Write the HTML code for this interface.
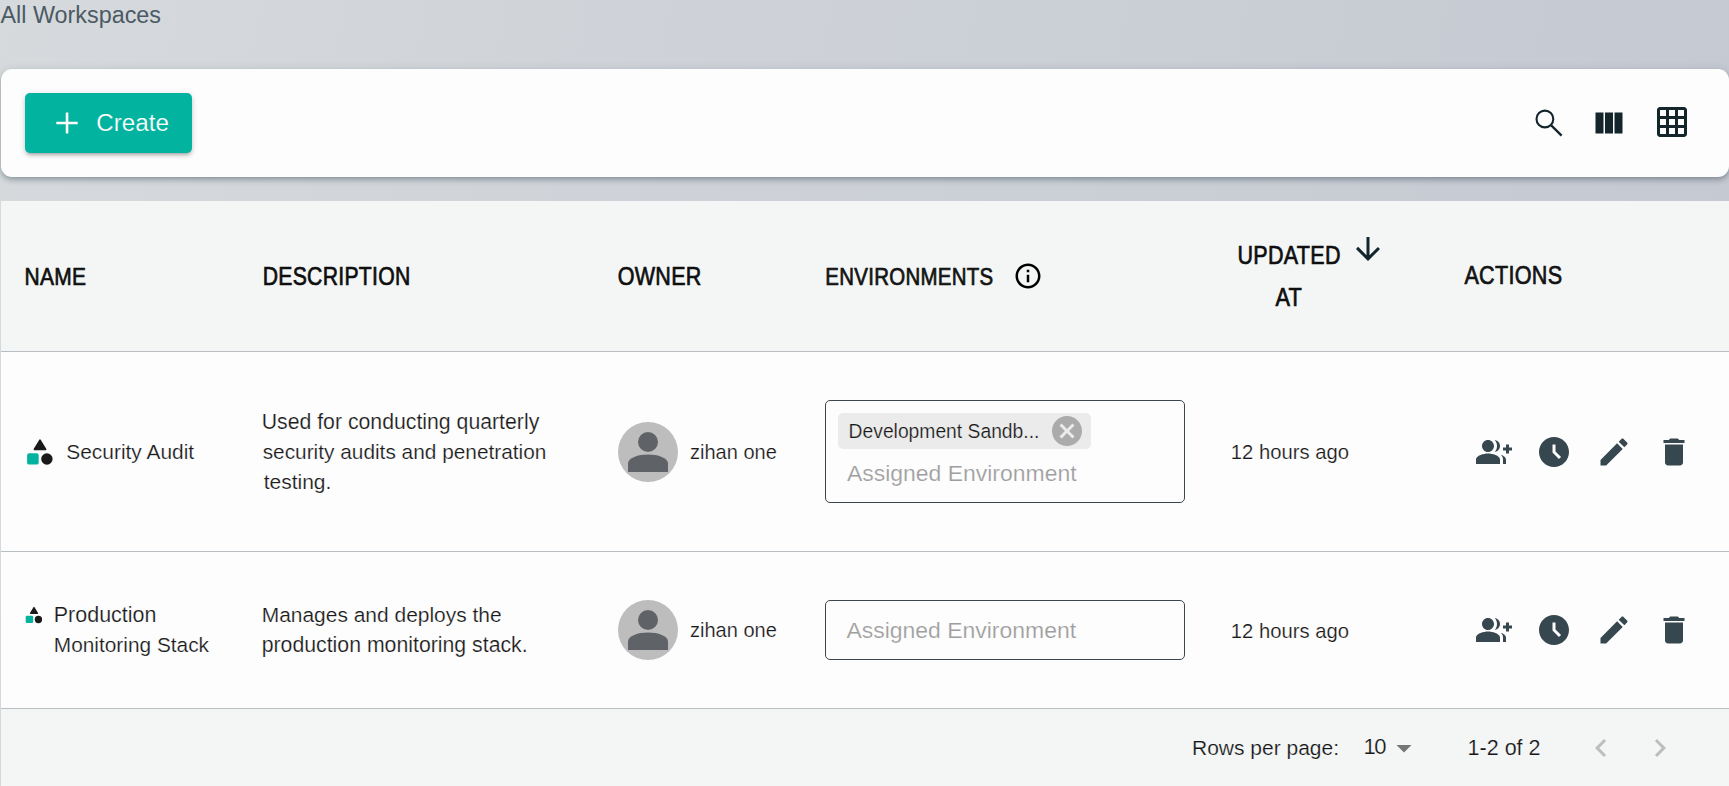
<!DOCTYPE html>
<html>
<head>
<meta charset="utf-8">
<style>
html,body{margin:0;padding:0}
body{width:1729px;height:786px;overflow:hidden;position:relative;
  background:linear-gradient(100deg,#d6dadd 0%,#cdd1d7 45%,#c4c8d1 100%);
  font-family:"Liberation Sans",sans-serif;}
.t{position:absolute;white-space:pre;line-height:1;margin:0}
.ic{position:absolute;display:block}
.hd{font-weight:700;font-size:21px;color:#0f0f0f;transform:scaleY(1.22);transform-origin:0 17.85px}
.card{position:absolute;left:1px;top:69px;width:1728px;height:108px;border-radius:11px;background:#fdfdfd;
  box-shadow:0 2px 4px -1px rgba(20,45,60,.22),0 4px 5px 0 rgba(20,45,60,.15),0 1px 10px 0 rgba(20,45,60,.12)}
.btn{position:absolute;left:25px;top:93px;width:167px;height:60px;border-radius:5px;background:#02b3a0;
  box-shadow:0 3px 3px -2px rgba(0,0,0,.2),0 3px 4px 0 rgba(0,0,0,.14),0 1px 7px 0 rgba(0,0,0,.1)}
.tbl{position:absolute;left:1px;top:201px;width:1728px;height:585px;background:#fdfdfd}
.hdr{position:absolute;left:0;top:0;width:1728px;height:150px;background:#f4f6f6;border-bottom:1px solid #b7bdc1}
.row1{position:absolute;left:0;top:151px;width:1728px;height:199px;border-bottom:1px solid #b7bdc1}
.row2{position:absolute;left:0;top:351px;width:1728px;height:156px;border-bottom:1px solid #b7bdc1}
.ftr{position:absolute;left:0;top:508px;width:1728px;height:77px;background:#f4f6f6}
.body{font-size:20.7px;color:#1a1a1a}
.envbox{position:absolute;left:825px;width:358px;border:1px solid #3e464d;border-radius:5px}
.chip{position:absolute;left:838px;top:413px;width:253px;height:36px;border-radius:5px;background:#ebebeb}
.av{position:absolute;left:618px;width:60px;height:60px;border-radius:50%;background:#bdbdbd;overflow:hidden}
</style>
</head>
<body>

<div class="card"></div>
<div class="btn"></div>
<svg class="ic" style="left:50px;top:105px" width="35" height="35" viewBox="0 0 35 35"><path fill="#fdfbfc" d="M15.75 7.4h2.6v9.3h9.35v2.6h-9.35v9.3h-2.6v-9.3H6.3v-2.6h9.45z"/></svg>

<!-- toolbar icons -->
<svg class="ic" style="left:1530px;top:104px" width="40" height="40" viewBox="0 0 40 40"><circle cx="14.9" cy="15" r="8.4" fill="none" stroke="#14252c" stroke-width="2.1"/><line x1="21" y1="21.1" x2="31.6" y2="31.6" stroke="#14252c" stroke-width="2.3"/></svg>
<svg class="ic" style="left:1591px;top:105px" width="36" height="36" viewBox="0 0 24 24"><path fill="#14252c" d="M14.67 5v14H9.33V5h5.34zm1 14H21V5h-5.33v14zm-7.34 0V5H3v14h5.33z"/></svg>
<svg class="ic" style="left:1654px;top:104px" width="36" height="36" viewBox="0 0 24 24"><path fill="#14252c" d="M20 2H4c-1.1 0-2 .9-2 2v16c0 1.1.9 2 2 2h16c1.1 0 2-.9 2-2V4c0-1.1-.9-2-2-2zM8 20H4v-4h4v4zm0-6H4v-4h4v4zm0-6H4V4h4v4zm6 12h-4v-4h4v4zm0-6h-4v-4h4v4zm0-6h-4V4h4v4zm6 12h-4v-4h4v4zm0-6h-4v-4h4v4zm0-6h-4V4h4v4z"/></svg>

<div class="tbl">
  <div class="hdr"></div>
  <div class="row1"></div>
  <div class="row2"></div>
  <div class="ftr"></div>
</div>

<!-- header labels -->
<svg class="ic" style="left:1012.9px;top:260.9px" width="30" height="30" viewBox="0 0 24 24"><path fill="#000" d="M11 7h2v2h-2zm0 4h2v6h-2zm1-9C6.48 2 2 6.48 2 12s4.48 10 10 10 10-4.48 10-10S17.52 2 12 2zm0 18c-4.41 0-8-3.590-8-8s3.59-8 8-8 8 3.59 8 8-3.59 8-8 8z"/></svg>
<svg class="ic" style="left:1350px;top:231px" width="36" height="36" viewBox="0 0 24 24"><path fill="#14252c" d="M20 12l-1.41-1.41L13 16.17V4h-2v12.17l-5.58-5.59L4 12l8 8 8-8z"/></svg>

<!-- row 1 -->
<svg class="ic" style="left:26px;top:438px" width="28" height="28" viewBox="0 0 28 28">
  <path d="M14 2.4 L19.4 11.3 L8.6 11.3 Z" fill="#1a1a1a" stroke="#1a1a1a" stroke-width="2" stroke-linejoin="round"/>
  <rect x="1.1" y="15.3" width="11.6" height="11.3" rx="2.2" fill="#03b39f"/>
  <circle cx="20.9" cy="21" r="5.7" fill="#1a1a1a"/>
</svg>
<div class="av" style="top:422px"><svg width="60" height="60" viewBox="0 0 60 60"><circle cx="30" cy="20" r="10" fill="#5f6368"/><path fill="#5f6368" d="M10 50V41.5C10 36 20 32.6 30 32.6S50 36 50 41.5V50Z"/></svg></div>
<div class="envbox" style="top:400px;height:100.5px"></div>
<div class="chip"></div>
<svg class="ic" style="left:1048.9px;top:412.9px" width="36" height="36" viewBox="0 0 24 24"><path fill="#ababab" d="M12 2C6.47 2 2 6.47 2 12s4.47 10 10 10 10-4.47 10-10S17.53 2 12 2zm5 13.59L15.59 17 12 13.41 8.41 17 7 15.59 10.59 12 7 8.41 8.41 7 12 10.59 15.59 7 17 8.41 13.41 12 17 15.59z"/></svg>

<!-- actions row 1 -->
<svg class="ic" style="left:1476px;top:433.6px" width="36" height="36" viewBox="0 0 24 24"><path fill="#37474f" d="M22 9V7h-2v2h-2v2h2v2h2v-2h2V9zM8 12c2.21 0 4-1.79 4-4s-1.79-4-4-4-4 1.79-4 4 1.79 4 4 4zm0 1c-2.67 0-8 1.34-8 4v3h16v-3c0-2.66-5.33-4-8-4zm4.51-8.95C13.43 5.11 14 6.49 14 8s-.57 2.89-1.49 3.95C14.47 11.7 16 10.04 16 8s-1.53-3.7-3.49-3.95zm4.02 9.78C17.42 14.66 18 15.7 18 17v3h2v-3c0-1.45-1.59-2.51-3.470-3.17z"/></svg>
<svg class="ic" style="left:1536px;top:433.7px" width="36" height="36" viewBox="0 0 24 24"><path fill="#37474f" d="M11.99 2C6.47 2 2 6.48 2 12s4.47 10 9.99 10C17.52 22 22 17.52 22 12S17.52 2 11.99 2zM15.29 16.71 11 12.41V7h2v4.59l3.71 3.71-1.42 1.41z"/></svg>
<svg class="ic" style="left:1596px;top:433.7px" width="36" height="36" viewBox="0 0 24 24"><path fill="#37474f" d="M3 17.25V21h3.75L17.81 9.94l-3.75-3.75L3 17.25zM20.71 7.04c.39-.39.39-1.02 0-1.41l-2.34-2.34c-.39-.39-1.02-.39-1.41 0l-1.83 1.83 3.75 3.75 1.83-1.83z"/></svg>
<svg class="ic" style="left:1656px;top:433.7px" width="36" height="36" viewBox="0 0 24 24"><path fill="#37474f" d="M6 19c0 1.1.9 2 2 2h8c1.1 0 2-.9 2-2V7H6v12zM19 4h-3.5l-1-1h-5l-1 1H5v2h14V4z"/></svg>

<!-- row 2 -->
<svg class="ic" style="left:25px;top:606px" width="18" height="18" viewBox="0 0 28 28">
  <path d="M14 2.4 L19.4 11.3 L8.6 11.3 Z" fill="#1a1a1a" stroke="#1a1a1a" stroke-width="2" stroke-linejoin="round"/>
  <rect x="1.1" y="15.3" width="11.6" height="11.3" rx="2.2" fill="#03b39f"/>
  <circle cx="20.9" cy="21" r="5.7" fill="#1a1a1a"/>
</svg>
<div class="av" style="top:600px"><svg width="60" height="60" viewBox="0 0 60 60"><circle cx="30" cy="20" r="10" fill="#5f6368"/><path fill="#5f6368" d="M10 50V41.5C10 36 20 32.6 30 32.6S50 36 50 41.5V50Z"/></svg></div>
<div class="envbox" style="top:600px;height:57.5px"></div>

<svg class="ic" style="left:1476px;top:611.6px" width="36" height="36" viewBox="0 0 24 24"><path fill="#37474f" d="M22 9V7h-2v2h-2v2h2v2h2v-2h2V9zM8 12c2.21 0 4-1.79 4-4s-1.79-4-4-4-4 1.79-4 4 1.79 4 4 4zm0 1c-2.67 0-8 1.34-8 4v3h16v-3c0-2.66-5.33-4-8-4zm4.51-8.95C13.43 5.11 14 6.49 14 8s-.57 2.89-1.49 3.95C14.47 11.7 16 10.04 16 8s-1.53-3.7-3.49-3.95zm4.02 9.78C17.42 14.66 18 15.7 18 17v3h2v-3c0-1.45-1.59-2.51-3.470-3.17z"/></svg>
<svg class="ic" style="left:1536px;top:611.7px" width="36" height="36" viewBox="0 0 24 24"><path fill="#37474f" d="M11.99 2C6.47 2 2 6.48 2 12s4.47 10 9.99 10C17.52 22 22 17.52 22 12S17.52 2 11.99 2zM15.29 16.71 11 12.41V7h2v4.59l3.71 3.71-1.42 1.41z"/></svg>
<svg class="ic" style="left:1596px;top:611.7px" width="36" height="36" viewBox="0 0 24 24"><path fill="#37474f" d="M3 17.25V21h3.75L17.81 9.94l-3.75-3.75L3 17.25zM20.71 7.04c.39-.39.39-1.02 0-1.41l-2.34-2.34c-.39-.39-1.02-.39-1.41 0l-1.83 1.83 3.75 3.75 1.83-1.83z"/></svg>
<svg class="ic" style="left:1656px;top:611.7px" width="36" height="36" viewBox="0 0 24 24"><path fill="#37474f" d="M6 19c0 1.1.9 2 2 2h8c1.1 0 2-.9 2-2V7H6v12zM19 4h-3.5l-1-1h-5l-1 1H5v2h14V4z"/></svg>

<!-- footer -->
<svg class="ic" style="left:1386px;top:730px" width="36" height="36" viewBox="0 0 24 24"><path fill="#757575" d="M7 10l5 5 5-5z"/></svg>
<svg class="ic" style="left:1582.5px;top:729.6px" width="36" height="36" viewBox="0 0 24 24"><path fill="#bdbdbd" d="M15.41 7.41L14 6l-6 6 6 6 1.41-1.41L10.83 12z"/></svg>
<svg class="ic" style="left:1642px;top:729.6px" width="36" height="36" viewBox="0 0 24 24"><path fill="#bdbdbd" d="M10 6L8.59 7.41 13.17 12l-4.58 4.59L10 18l6-6z"/></svg>
<div class="t" style="left:0.5px;top:3.53px;font-size:23.37px;color:#4b5a64;;">All Workspaces</div>
<div class="t" style="left:96.3px;top:110.55px;font-size:24.18px;color:#ffffff;-webkit-text-stroke:0.2px #02b3a0;">Create</div>
<div class="t" style="left:24.6px;top:266.67px;font-size:20.98px;color:#0f0f0f;-webkit-text-stroke:0.6px #0f0f0f;letter-spacing:0.3px;transform:scaleY(1.18);transform-origin:0 17.83px;">NAME</div>
<div class="t" style="left:262.7px;top:266.51px;font-size:21.17px;color:#0f0f0f;-webkit-text-stroke:0.6px #0f0f0f;letter-spacing:0.3px;transform:scaleY(1.18);transform-origin:0 17.99px;">DESCRIPTION</div>
<div class="t" style="left:617.7px;top:268.20px;font-size:21.53px;color:#0f0f0f;-webkit-text-stroke:0.6px #0f0f0f;letter-spacing:0.3px;transform:scaleY(1.18);transform-origin:0 18.30px;">OWNER</div>
<div class="t" style="left:825.3px;top:268.21px;font-size:20.46px;color:#161616;-webkit-text-stroke:0.6px #0f0f0f;letter-spacing:0.3px;transform:scaleY(1.18);transform-origin:0 17.39px;">ENVIRONMENTS</div>
<div class="t" style="left:1237.5px;top:247.33px;font-size:21.50px;color:#0f0f0f;-webkit-text-stroke:0.6px #0f0f0f;letter-spacing:0.3px;transform:scaleY(1.18);transform-origin:0 18.27px;">UPDATED</div>
<div class="t" style="left:1275.4px;top:288.11px;font-size:21.75px;color:#0f0f0f;-webkit-text-stroke:0.6px #0f0f0f;letter-spacing:0.3px;transform:scaleY(1.18);transform-origin:0 18.49px;">AT</div>
<div class="t" style="left:1464.4px;top:265.97px;font-size:21.57px;color:#161616;-webkit-text-stroke:0.6px #0f0f0f;letter-spacing:0.3px;transform:scaleY(1.18);transform-origin:0 18.33px;">ACTIONS</div>
<div class="t" style="left:66.3px;top:442.22px;font-size:20.92px;color:#1a1a1a;-webkit-text-stroke:0.2px #fdfdfd;">Security Audit</div>
<div class="t" style="left:261.7px;top:411.93px;font-size:21.26px;color:#1a1a1a;-webkit-text-stroke:0.2px #fdfdfd;">Used for conducting quarterly</div>
<div class="t" style="left:262.7px;top:442.29px;font-size:20.83px;color:#1a1a1a;-webkit-text-stroke:0.2px #fdfdfd;">security audits and penetration</div>
<div class="t" style="left:263.7px;top:471.16px;font-size:20.99px;color:#1a1a1a;-webkit-text-stroke:0.2px #fdfdfd;">testing.</div>
<div class="t" style="left:690.0px;top:441.68px;font-size:20.03px;color:#1a1a1a;-webkit-text-stroke:0.2px #fdfdfd;">zihan one</div>
<div class="t" style="left:848.6px;top:421.50px;font-size:19.29px;color:#1a1a1a;-webkit-text-stroke:0.2px #ebebeb;">Development Sandb...</div>
<div class="t" style="left:846.9px;top:461.98px;font-size:22.96px;color:#9e9e9e;-webkit-text-stroke:0.2px #fdfdfd;">Assigned Environment</div>
<div class="t" style="left:1230.8px;top:441.88px;font-size:20.26px;color:#1a1a1a;-webkit-text-stroke:0.2px #fdfdfd;">12 hours ago</div>
<div class="t" style="left:53.8px;top:604.75px;font-size:21.48px;color:#1a1a1a;-webkit-text-stroke:0.2px #fdfdfd;">Production</div>
<div class="t" style="left:53.8px;top:635.28px;font-size:20.85px;color:#1a1a1a;-webkit-text-stroke:0.2px #fdfdfd;">Monitoring Stack</div>
<div class="t" style="left:261.7px;top:605.18px;font-size:20.96px;color:#1a1a1a;-webkit-text-stroke:0.2px #fdfdfd;">Manages and deploys the</div>
<div class="t" style="left:261.7px;top:634.91px;font-size:21.28px;color:#1a1a1a;-webkit-text-stroke:0.2px #fdfdfd;">production monitoring stack.</div>
<div class="t" style="left:690.0px;top:620.08px;font-size:20.03px;color:#1a1a1a;-webkit-text-stroke:0.2px #fdfdfd;">zihan one</div>
<div class="t" style="left:846.4px;top:618.88px;font-size:22.96px;color:#9e9e9e;-webkit-text-stroke:0.2px #fdfdfd;">Assigned Environment</div>
<div class="t" style="left:1230.8px;top:620.58px;font-size:20.26px;color:#1a1a1a;-webkit-text-stroke:0.2px #fdfdfd;">12 hours ago</div>
<div class="t" style="left:1192.0px;top:736.96px;font-size:20.99px;color:#161616;-webkit-text-stroke:0.2px #f4f6f6;">Rows per page:</div>
<div class="t" style="left:1363.5px;top:735.71px;font-size:21.99px;color:#161616;letter-spacing:-1.5px;-webkit-text-stroke:0.2px #f4f6f6;">10</div>
<div class="t" style="left:1467.6px;top:737.51px;font-size:21.51px;color:#161616;-webkit-text-stroke:0.2px #f4f6f6;">1-2 of 2</div>
</body>
</html>
